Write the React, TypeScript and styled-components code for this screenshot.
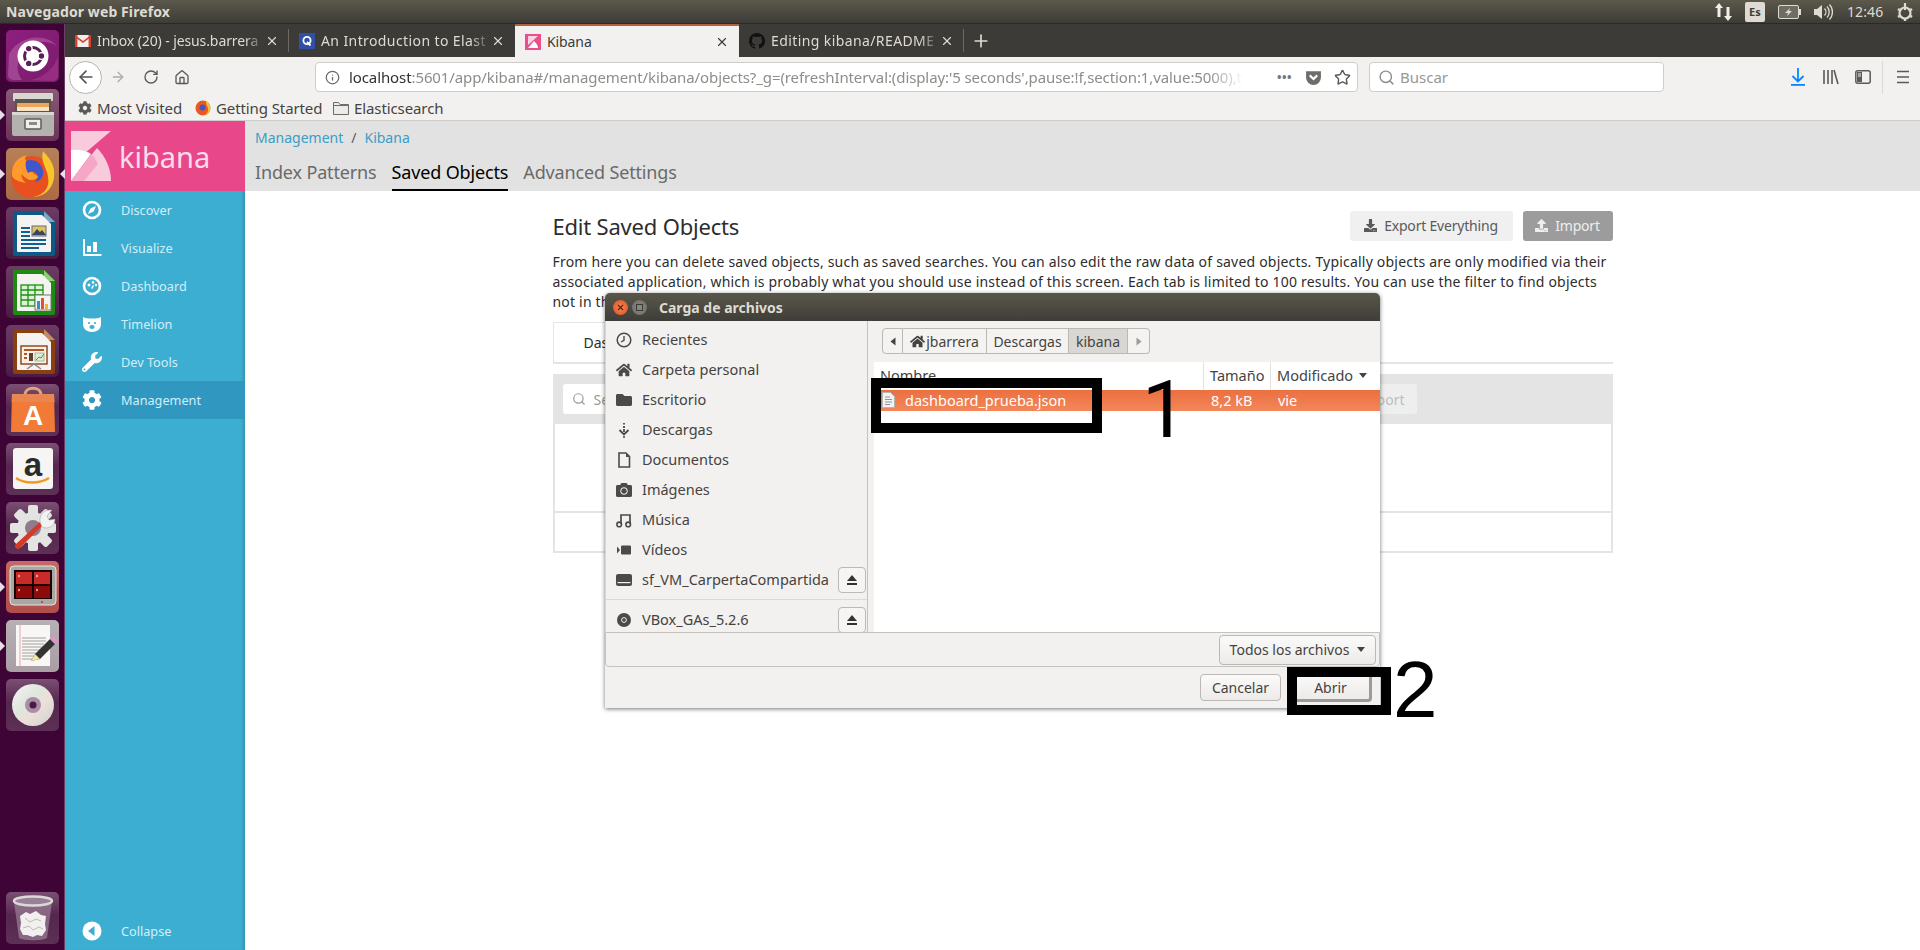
import React from "react";
import styled, { createGlobalStyle } from "styled-components";
import { ArrowLeft, ArrowRight, RotateCw, Home, Info, Star, Search, Plus, X } from "lucide-react";
import { FaWrench, FaCog, FaHome, FaCamera, FaFolder, FaDownload, FaUpload } from "react-icons/fa";

const UI = `"Noto Sans", "Open Sans", sans-serif`;

const Global = createGlobalStyle`
  html, body { margin: 0; padding: 0; background: #fff; overflow: hidden; }
  * { box-sizing: border-box; }
  body { font-family: ${UI}; }
`;

const Screen = styled.div`
  position: relative;
  width: 1920px;
  height: 950px;
  overflow: hidden;
  display: flex;
  flex-direction: column;
  background: #fff;
`;

/* ---------- Ubuntu top panel ---------- */
const TopPanel = styled.header`
  height: 24px;
  flex: none;
  display: flex;
  align-items: center;
  justify-content: space-between;
  padding: 0 0 0 6px;
  background: linear-gradient(#5c584c, #3d3c37);
  border-bottom: 1px solid #2b2a27;
  color: #dfdbd2;
  font-size: 14px;
  font-weight: 700;
  letter-spacing: 0.1px;
`;
const Tray = styled.div`
  display: flex;
  align-items: center;
  height: 24px;
  color: #dfdbd2;
`;
const TraySlot = styled.span<{ $w: number; $mr: number }>`
  width: ${(p) => p.$w}px;
  margin-right: ${(p) => p.$mr}px;
  display: flex;
  align-items: center;
  justify-content: center;
`;
const LangBadge = styled.span`
  width: 20px;
  height: 20px;
  margin-right: 13px;
  background: #dfdbd2;
  color: #3c3b37;
  border-radius: 2px;
  font-size: 11px;
  font-weight: 700;
  display: flex;
  align-items: center;
  justify-content: center;
`;
const Clock = styled.span`
  font-size: 14px;
  font-weight: 400;
  width: 37px;
  margin-right: 13px;
`;

/* ---------- layout ---------- */
const Desktop = styled.div`
  flex: 1;
  display: flex;
  min-height: 0;
`;
const Launcher = styled.nav`
  width: 65px;
  flex: none;
  display: flex;
  flex-direction: column;
  gap: 7px;
  padding: 6px 0 6px 6px;
  background: #3f0436;
  border-right: 1px solid #6e3d66;
`;
const Tile = styled.div<{ $bg?: string; $end?: boolean }>`
  position: relative;
  width: 53px;
  height: 52px;
  flex: none;
  border-radius: 5px;
  background: ${(p) => p.$bg || "linear-gradient(#7b5074, #55264e 45%, #5d3056)"};
  margin-top: ${(p) => (p.$end ? "auto" : "0")};
  display: flex;
  align-items: center;
  justify-content: center;
`;
const PipLeft = styled.i`
  position: absolute;
  left: -6px;
  top: 21px;
  border: 5px solid transparent;
  border-left-color: #e6e0e4;
  border-right-width: 0;
`;
const PipRight = styled.i`
  position: absolute;
  right: -6px;
  top: 21px;
  border: 5px solid transparent;
  border-right-color: #e6e0e4;
  border-left-width: 0;
`;
const Browser = styled.main`
  flex: 1;
  min-width: 0;
  display: flex;
  flex-direction: column;
`;

/* ---------- tabs ---------- */
const TabStrip = styled.div`
  height: 33px;
  flex: none;
  display: flex;
  background: #3c3b37;
  color: #dfdbd2;
  font-size: 14px;
  position: relative;
`;
const BrowserTab = styled.div<{ $w: number; $active?: boolean; $sep?: boolean }>`
  position: relative;
  width: ${(p) => p.$w}px;
  height: 33px;
  flex: none;
  display: flex;
  align-items: center;
  padding: 0 10px 0 10px;
  background: ${(p) => (p.$active ? "#f2f1ef" : "transparent")};
  color: ${(p) => (p.$active ? "#3c3b37" : "#dfdbd2")};
  border-top: ${(p) => (p.$active ? "2px solid #b3603e" : "0")};
  &::after {
    content: "";
    display: ${(p) => (p.$sep ? "block" : "none")};
    position: absolute;
    right: 0;
    top: 5px;
    bottom: 5px;
    width: 1px;
    background: #6a6964;
  }
`;
const TabLabel = styled.span<{ $fade?: boolean; $ls?: number }>`
  flex: 1;
  min-width: 0;
  margin-left: 6px;
  white-space: nowrap;
  letter-spacing: ${(p) => p.$ls ?? -0.1}px;
  ${(p) =>
    p.$fade &&
    `-webkit-mask-image: linear-gradient(90deg,#000 88%,transparent); mask-image: linear-gradient(90deg,#000 88%,transparent);`}
`;
const NewTab = styled.div`
  width: 34px;
  display: flex;
  align-items: center;
  justify-content: center;
  color: #dfdbd2;
`;

/* ---------- nav bar ---------- */
const NavBar = styled.div`
  height: 43px;
  flex: none;
  display: flex;
  align-items: center;
  background: #f2f1ef;
  color: #5a5855;
  padding: 0 0 3px 4px;
`;
const BackCircle = styled.div`
  width: 33px;
  height: 33px;
  flex: none;
  border-radius: 50%;
  background: #fff;
  border: 1px solid #b5b3ae;
  display: flex;
  align-items: center;
  justify-content: center;
  color: #55534f;
`;
const NavSlot = styled.span<{ $w: number; $ml?: number; $c?: string }>`
  width: ${(p) => p.$w}px;
  margin-left: ${(p) => p.$ml || 0}px;
  color: ${(p) => p.$c || "inherit"};
  display: flex;
  align-items: center;
  justify-content: center;
  flex: none;
`;
const UrlBox = styled.div`
  width: 1043px;
  height: 30px;
  margin-left: 125px;
  flex: none;
  background: #fff;
  border: 1px solid #cfcdc8;
  border-radius: 4px;
  display: flex;
  align-items: center;
  padding-left: 9px;
  font-size: 15px;
`;
const UrlText = styled.div`
  width: 895px;
  flex: none;
  margin-left: 9px;
  white-space: nowrap;
  color: #8f8d89;
  letter-spacing: -0.1px;
  -webkit-mask-image: linear-gradient(90deg, #000 96%, transparent);
  mask-image: linear-gradient(90deg, #000 96%, transparent);
  b {
    font-weight: 400;
    color: #33322f;
  }
`;
const UrlDots = styled.span`
  width: 20px;
  margin-left: 33px;
  color: #777;
  font-weight: 700;
  font-size: 12px;
  letter-spacing: 0.5px;
`;
const SearchBox = styled.div`
  width: 295px;
  height: 30px;
  margin-left: 11px;
  flex: none;
  background: #fff;
  border: 1px solid #cfcdc8;
  border-radius: 4px;
  display: flex;
  align-items: center;
  gap: 5px;
  padding-left: 8px;
  color: #9a9895;
  font-size: 15px;
`;
const ToolSep = styled.span`
  width: 1px;
  height: 33px;
  background: #dcdad6;
  margin-left: 11px;
  flex: none;
`;

/* ---------- bookmarks ---------- */
const Bookmarks = styled.div`
  height: 21px;
  flex: none;
  display: flex;
  align-items: center;
  padding: 0 0 5px 13px;
  background: #f2f1ef;
  border-bottom: 1px solid #cfcdc8;
  color: #45433f;
  font-size: 15px;
`;
const Bookmark = styled.span<{ $w: number }>`
  width: ${(p) => p.$w}px;
  flex: none;
  display: flex;
  align-items: center;
  gap: 5px;
  white-space: nowrap;
  letter-spacing: -0.1px;
`;

/* ---------- kibana ---------- */
const KibanaApp = styled.div`
  flex: 1;
  display: flex;
  min-height: 0;
`;
const Side = styled.aside`
  width: 180px;
  flex: none;
  display: flex;
  flex-direction: column;
  background: #3caed2;
  box-shadow: inset -4px 0 3px -2px rgba(0, 0, 0, 0.15);
`;
const LogoBar = styled.div`
  height: 70px;
  flex: none;
  background: #e8488a;
  display: flex;
  align-items: center;
  padding-left: 6px;
  gap: 8px;
  color: #fbdce9;
  font-size: 29px;
  line-height: 1;
`;
const NavList = styled.ul`
  list-style: none;
  margin: 0;
  padding: 0;
  flex: 1;
  display: flex;
  flex-direction: column;
`;
const NavItem = styled.li<{ $active?: boolean; $end?: boolean }>`
  height: 38px;
  flex: none;
  display: flex;
  align-items: center;
  padding-left: 17px;
  gap: 19px;
  color: #d2eef8;
  font-size: 12.7px;
  background: ${(p) => (p.$active ? "#2f97c0" : "transparent")};
  margin-top: ${(p) => (p.$end ? "auto" : "0")};
  svg {
    width: 20px;
    height: 20px;
    color: #fff;
    flex: none;
  }
`;
const Page = styled.section`
  flex: 1;
  min-width: 0;
  display: flex;
  flex-direction: column;
`;
const AppHeader = styled.div`
  height: 70px;
  flex: none;
  background: #e2e2e2;
  padding: 7px 0 0 10px;
`;
const Crumbs = styled.div`
  display: flex;
  gap: 8px;
  font-size: 14px;
  line-height: 20px;
  color: #5a5a5a;
  a {
    color: #3c9dc4;
  }
`;
const HeaderTabs = styled.div`
  display: flex;
  gap: 15px;
  margin-top: 8px;
  font-size: 18px;
  letter-spacing: -0.15px;
`;
const HeaderTab = styled.span<{ $active?: boolean }>`
  height: 35px;
  line-height: 33px;
  color: ${(p) => (p.$active ? "#000" : "#6a6a6a")};
  border-bottom: ${(p) => (p.$active ? "2px solid #000" : "2px solid transparent")};
`;
const Container = styled.div`
  width: 1060px;
  margin: 0 auto;
  padding-top: 20px;
`;
const TitleRow = styled.div`
  display: flex;
  align-items: center;
  height: 30px;
`;
const Title = styled.h1`
  margin: 0;
  flex: 1;
  font-size: 22px;
  font-weight: 400;
  color: #2d2d2d;
  letter-spacing: -0.2px;
`;
const KButton = styled.button<{ $primary?: boolean; $w: number }>`
  height: 30px;
  width: ${(p) => p.$w}px;
  border: 0;
  border-radius: 3px;
  margin-left: 10px;
  padding: 0 0 2px;
  display: flex;
  align-items: center;
  justify-content: center;
  gap: 7px;
  font-family: ${UI};
  font-size: 14px;
  letter-spacing: -0.2px;
  background: ${(p) => (p.$primary ? "#9c9c9c" : "#f0f0f0")};
  color: ${(p) => (p.$primary ? "#eee" : "#5a5a5a")};
`;
const Lead = styled.p`
  margin: 11px 0 0;
  font-size: 14px;
  line-height: 20px;
  color: #2d2d2d;
  white-space: nowrap;
  letter-spacing: 0.2px;
`;
const ObjectTabs = styled.div`
  margin-top: 10px;
  height: 42px;
  border-bottom: 2px solid #e4e4e4;
  display: flex;
`;
const ObjectTab = styled.div`
  width: 200px;
  height: 41px;
  border: 1px solid #e4e4e4;
  border-bottom: 0;
  padding: 10px 0 0 30px;
  font-size: 14px;
  color: #2d2d2d;
`;
const FilterBar = styled.div`
  margin-top: 10px;
  height: 50px;
  background: #e4e4e4;
  padding: 10px;
  display: flex;
`;
const FilterInput = styled.div`
  width: 700px;
  height: 30px;
  background: #fff;
  border-radius: 3px;
  display: flex;
  align-items: center;
  gap: 8px;
  padding-left: 9px;
  color: #999;
  font-size: 14px;
`;
const GhostBtn = styled.span`
  width: 90px;
  height: 30px;
  margin-left: 64px;
  border-radius: 3px;
  background: #eee;
  color: #bdbdbd;
  font-size: 14px;
  display: flex;
  align-items: center;
  justify-content: flex-end;
  padding-right: 12px;
`;
const TableBody = styled.div`
  height: 89px;
  border: 2px solid #e4e4e4;
  border-top: 0;
`;
const TableFoot = styled.div`
  height: 40px;
  border: 2px solid #e4e4e4;
  border-top: 0;
`;

/* ---------- file dialog ---------- */
const Dialog = styled.div`
  position: absolute;
  left: 605px;
  top: 293px;
  width: 775px;
  height: 415px;
  display: flex;
  flex-direction: column;
  background: #f2f1f0;
  border-radius: 5px 5px 0 0;
  box-shadow: 0 1px 4px rgba(0, 0, 0, 0.55);
  font-size: 14.5px;
  color: #45433f;
`;
const DialogTitle = styled.div`
  height: 28px;
  flex: none;
  border-radius: 5px 5px 0 0;
  background: linear-gradient(#5a564a, #3e3d38);
  display: flex;
  align-items: center;
  padding-left: 8px;
  color: #dfdbd2;
  font-weight: 700;
  font-size: 14px;
`;
const WinBtn = styled.span<{ $close?: boolean }>`
  width: 15px;
  height: 15px;
  border-radius: 50%;
  margin-right: 4px;
  background: ${(p) => (p.$close ? "radial-gradient(#f08a5a,#df4e1f)" : "radial-gradient(#8d8b85,#6b6962)")};
  color: ${(p) => (p.$close ? "#5a2008" : "#3c3b37")};
  display: flex;
  align-items: center;
  justify-content: center;
`;
const MaxGlyph = styled.i`
  width: 7px;
  height: 7px;
  border: 1px solid #3c3b37;
`;
const DialogTitleText = styled.span`
  margin-left: 8px;
`;
const DialogBody = styled.div`
  height: 311px;
  flex: none;
  display: flex;
`;
const Places = styled.div`
  width: 263px;
  flex: none;
  padding-top: 4px;
  border-right: 1px solid #c6c3be;
  border-left: 1px solid #d8d6d2;
  overflow: hidden;
`;
const Place = styled.div<{ $mt?: number }>`
  height: 30px;
  margin-top: ${(p) => p.$mt || 0}px;
  display: flex;
  align-items: center;
  padding-left: 10px;
  gap: 10px;
  white-space: nowrap;
  svg {
    width: 16px;
    height: 16px;
    flex: none;
    color: #4c4a46;
  }
`;
const PlaceName = styled.span`
  flex: 1;
  min-width: 0;
  padding-bottom: 2px;
`;
const Eject = styled.span`
  width: 28px;
  height: 26px;
  flex: none;
  margin-right: 1px;
  background: #f6f5f4;
  border: 1px solid #bcb9b4;
  border-radius: 4px;
  display: flex;
  align-items: center;
  justify-content: center;
  svg {
    width: 12px;
    height: 12px;
  }
`;
const PlaceRule = styled.div`
  height: 1px;
  margin-top: 4px;
  background: #dbd9d5;
`;
const FilesPane = styled.div`
  flex: 1;
  min-width: 0;
  display: flex;
  flex-direction: column;
  padding-left: 6px;
`;
const PathBar = styled.div`
  height: 41px;
  flex: none;
  padding: 7px 0 0 8px;
  display: flex;
`;
const Crumb = styled.span<{ $w: number; $on?: boolean; $first?: boolean; $last?: boolean }>`
  width: ${(p) => p.$w}px;
  height: 26px;
  flex: none;
  display: flex;
  align-items: center;
  justify-content: center;
  gap: 1px;
  border: 1px solid #bcb9b4;
  border-left-width: ${(p) => (p.$first ? 1 : 0)}px;
  border-radius: ${(p) => (p.$first ? "4px 0 0 4px" : p.$last ? "0 4px 4px 0" : "0")};
  background: ${(p) => (p.$on ? "#d9d7d3" : "#f4f3f2")};
  color: #45433f;
  font-size: 14px;
`;
const ListPane = styled.div`
  flex: 1;
  background: #fff;
  display: flex;
  flex-direction: column;
`;
const ColHead = styled.div`
  height: 28px;
  flex: none;
  display: flex;
  align-items: center;
  color: #45433f;
`;
const Col = styled.span<{ $w: number; $sep?: boolean }>`
  width: ${(p) => p.$w}px;
  flex: none;
  height: 100%;
  display: flex;
  align-items: center;
  gap: 6px;
  padding: 0 0 2px 6px;
  border-left: ${(p) => (p.$sep ? "1px solid #e4e2df" : "0")};
`;
const FileRow = styled.div`
  height: 21px;
  flex: none;
  display: flex;
  align-items: center;
  padding-bottom: 2px;
  color: #fff;
  background: linear-gradient(#ec6f3f, #f2875a);
`;
const FileName = styled.span`
  width: 329px;
  flex: none;
  display: flex;
  align-items: center;
  gap: 10px;
  padding-left: 8px;
`;
const Cell = styled.span<{ $w: number }>`
  width: ${(p) => p.$w}px;
  flex: none;
  padding-left: 8px;
`;
const DialogFilter = styled.div`
  height: 35px;
  flex: none;
  display: flex;
  justify-content: flex-end;
  align-items: center;
  padding-right: 3px;
  border: 1px solid #c6c3be;
  border-radius: 0 0 4px 4px;
`;
const GtkBtn = styled.span<{ $w: number; $h: number }>`
  width: ${(p) => p.$w}px;
  height: ${(p) => p.$h}px;
  flex: none;
  border: 1px solid #bcb9b4;
  border-radius: 4px;
  background: linear-gradient(#fbfafa, #ecebe9);
  display: flex;
  align-items: center;
  justify-content: center;
  gap: 8px;
  color: #45433f;
  font-size: 14px;
`;
const Caret = styled.i`
  border: 4px solid transparent;
  border-top: 5px solid #45433f;
  border-bottom-width: 0;
`;
const DialogActions = styled.div`
  height: 41px;
  flex: none;
  display: flex;
  align-items: flex-start;
  padding: 7px 0 0 595px;
  gap: 10px;
`;
const OpenBtn = styled(GtkBtn)`
  border-right: 3px solid #9e9b96;
  border-bottom: 3px solid #9e9b96;
`;

/* ---------- annotations ---------- */
const Mark = styled.div<{ $l: number; $t: number; $w: number; $h: number }>`
  position: absolute;
  left: ${(p) => p.$l}px;
  top: ${(p) => p.$t}px;
  width: ${(p) => p.$w}px;
  height: ${(p) => p.$h}px;
  border: 10px solid #000;
`;
const Digit = styled.span<{ $l: number; $t: number; $font: string }>`
  position: absolute;
  left: ${(p) => p.$l}px;
  top: ${(p) => p.$t}px;
  font-family: ${(p) => p.$font}, sans-serif;
  font-size: 80px;
  line-height: 80px;
  color: #000;
`;

/* ---------- drawings ---------- */
const Ico = ({ children, s = 52 }: { children: React.ReactNode; s?: number }) => (
  <svg width={s} height={s} viewBox="0 0 52 52">{children}</svg>
);
const Doc = ({ edge, corner, children }: { edge: string; corner: string; children: React.ReactNode }) => (
  <Ico>
    <path d="M6 4h31l11 11v32a2 2 0 0 1-2 2H8a2 2 0 0 1-2-2z" fill={edge} />
    <path d="M37 4l11 11H37z" fill={corner} />
    <path d="M10 8h25l9 9v27a1 1 0 0 1-1 1H11a1 1 0 0 1-1-1z" fill="#f4f3f1" />
    {children}
  </Ico>
);
const UbuntuIcon = () => (
  <Ico>
    <path d="M2 24C12 6 38 2 50 16 38 8 18 12 12 30c-3 8-1 14 3 20H6a5 5 0 0 1-5-5z" fill="#b765a8" opacity=".55" />
    <path d="M16 50c14 2 30-8 35-24v20a5 5 0 0 1-5 5z" fill="#a8398f" opacity=".6" />
    <circle cx="26" cy="26" r="15.5" fill="#fff" />
    <circle cx="26" cy="26" r="8.5" fill="none" stroke="#5b1f55" strokeWidth="3" />
    <circle cx="34.5" cy="26" r="3.4" fill="#5b1f55" stroke="#fff" strokeWidth="1.4" />
    <circle cx="21.7" cy="18.6" r="3.4" fill="#5b1f55" stroke="#fff" strokeWidth="1.4" />
    <circle cx="21.7" cy="33.4" r="3.4" fill="#5b1f55" stroke="#fff" strokeWidth="1.4" />
  </Ico>
);
const FilesIcon = () => (
  <Ico>
    <rect x="6" y="4" width="40" height="8" rx="1" fill="#d8d7d4" />
    <rect x="8" y="10" width="36" height="15" fill="#59544d" />
    <rect x="10" y="14" width="32" height="4" fill="#f0a35a" />
    <rect x="10" y="18" width="32" height="4" fill="#f8e4c4" />
    <rect x="5" y="23" width="42" height="24" rx="2" fill="#b3b2ae" />
    <rect x="5" y="23" width="42" height="3" fill="#d9d8d5" />
    <rect x="18" y="30" width="16" height="10" rx="1" fill="#f0efed" stroke="#5d5b57" strokeWidth="1.5" />
    <rect x="22" y="33" width="8" height="3" fill="#8b8a86" />
  </Ico>
);
const FirefoxIcon = () => (
  <Ico>
    <circle cx="25" cy="29" r="21" fill="#e8501f" />
    <path d="M36 3c5 6 13 13 11 27-2 13-12 19-21 19 12-2 17-11 15-20C40 20 33 14 36 3z" fill="#f8c52c" />
    <path d="M5 28C4 16 11 9 20 7c-3 3-2 5 0 6 4 1 10 3 12 9-4-2-7-1-9 1 3 0 5 3 3 6-3 3-9 2-11-3-1 2 0 6 4 9C13 34 7 32 5 28z" fill="#ff9a2b" />
    <path d="M19 13c8-3 16 2 17 10 1 6-3 10-8 11 3-3 3-7 1-9-3-2-6-1-8 0-2-3-3-8-2-12z" fill="#3f57c9" />
    <path d="M22 27c4-2 8-1 9 2-2 3-7 4-11 2z" fill="#f8a12a" />
  </Ico>
);
const WriterIcon = () => (
  <Doc edge="#0c5a85" corner="#7ba7c6">
    <rect x="14" y="20" width="9" height="2" fill="#10608f" />
    <rect x="14" y="24" width="9" height="2" fill="#10608f" />
    <rect x="14" y="28" width="9" height="2" fill="#10608f" />
    <rect x="14" y="32" width="25" height="2" fill="#10608f" />
    <rect x="14" y="36" width="25" height="2" fill="#10608f" />
    <rect x="14" y="40" width="18" height="2" fill="#10608f" />
    <rect x="25" y="19" width="14" height="10" fill="#e8c15d" stroke="#5a6f83" />
    <path d="M25 28l5-6 3 3 2-2 4 5z" fill="#34475c" />
  </Doc>
);
const CalcIcon = () => (
  <Doc edge="#1f8a12" corner="#8ccf72">
    <g fill="none" stroke="#18940f" strokeWidth="1.3">
      <rect x="14" y="19" width="22" height="21" fill="#dff1d8" />
      <path d="M14 24h22M14 29h22M14 34h22M21 19v21M28 19v21" />
    </g>
    <rect x="28" y="29" width="16" height="15" fill="#f3f3f3" stroke="#777" />
    <rect x="30" y="35" width="3" height="8" fill="#3b8dc9" />
    <rect x="34" y="32" width="3" height="11" fill="#e2532d" />
    <rect x="38" y="38" width="3" height="5" fill="#f2b32a" />
  </Doc>
);
const ImpressIcon = () => (
  <Doc edge="#8a3f12" corner="#c58c62">
    <rect x="14" y="21" width="26" height="18" fill="#fdf1e4" stroke="#8a3f12" strokeWidth="1.4" />
    <rect x="17" y="24" width="20" height="2" fill="#b4552a" />
    <rect x="17" y="28" width="3" height="2" fill="#b4552a" />
    <rect x="17" y="32" width="3" height="2" fill="#b4552a" />
    <rect x="22" y="28" width="4" height="8" fill="#5c4030" />
    <rect x="28" y="28" width="9" height="8" fill="#dcefd8" stroke="#888" strokeWidth=".6" />
    <path d="M29 35l3-3 2 1 3-4" stroke="#3d9b2e" fill="none" />
    <path d="M20 44l7-5 7 5" fill="none" stroke="#888" strokeWidth="1.5" />
  </Doc>
);
const SoftwareIcon = () => (
  <Ico>
    <path d="M18 11c0-9 16-9 16 0" fill="none" stroke="#e2a27d" strokeWidth="3" />
    <path d="M5 10h42l1 38H4z" fill="#f27a37" />
    <path d="M5 10h42l.6 8H4.6z" fill="#e88652" />
    <text x="26" y="41" textAnchor="middle" fontFamily="Liberation Sans" fontWeight="700" fontSize="28" fill="#fff">A</text>
  </Ico>
);
const AmazonIcon = () => (
  <Ico>
    <rect x="6" y="5" width="40" height="41" rx="3" fill="#f6f5f3" />
    <text x="26" y="33" textAnchor="middle" fontFamily="Liberation Sans" fontWeight="700" fontSize="33" fill="#2a2a2a">a</text>
    <path d="M9 35c9 6 23 6 33 0" fill="none" stroke="#f29a1f" strokeWidth="2.5" />
  </Ico>
);
const ToolsIcon = () => (
  <Ico>
    <g fill="#e3e3e1">
      <circle cx="26" cy="26" r="16" />
      <rect x="21" y="3" width="10" height="46" rx="2" />
      <rect x="3" y="21" width="46" height="10" rx="2" />
      <rect x="21" y="3" width="10" height="46" rx="2" transform="rotate(45 26 26)" />
      <rect x="21" y="3" width="10" height="46" rx="2" transform="rotate(-45 26 26)" />
    </g>
    <circle cx="26" cy="26" r="8" fill="#8f7b8b" />
    <path d="M9 42l25-23 3 3-24 24a3 3 0 0 1-5-3z" fill="#d33a28" />
    <path d="M33 20c-1-7 4-13 12-12l-5 6 2 4 6-1c0 7-7 11-13 8z" fill="#f2f2f0" stroke="#999" strokeWidth=".5" />
  </Ico>
);
const TerminalIcon = () => (
  <Ico>
    <rect x="3" y="5" width="46" height="39" rx="4" fill="#a9a8a5" stroke="#e5e5e3" />
    <rect x="7" y="9" width="38" height="29" fill="#1a0000" />
    <rect x="9" y="11" width="16" height="12" fill="#c92a2a" />
    <rect x="27" y="11" width="16" height="12" fill="#c92a2a" />
    <rect x="9" y="25" width="16" height="12" fill="#8e0b0b" />
    <rect x="27" y="25" width="16" height="12" fill="#8e0b0b" />
    <path d="M11 14l2 1-2 1M29 14l2 1-2 1M11 28l2 1-2 1M29 28l2 1-2 1" stroke="#fff" fill="none" strokeWidth=".7" />
    <circle cx="35" cy="41" r="1" fill="#e02020" />
  </Ico>
);
const EditorIcon = () => (
  <Ico>
    <rect x="9" y="5" width="34" height="41" fill="#f8f7f5" />
    <path d="M13 5v41" stroke="#e6a9a9" />
    <path d="M15 18h24M15 21h24M15 24h22M15 27h24M15 30h18M15 33h14M15 36h12M15 39h16" stroke="#8b8b8b" strokeWidth=".8" />
    <path d="M24 41l4-7 15-15 5 5-15 15z" fill="#333" />
    <path d="M43 19l3-3 5 5-3 3z" fill="#e493c8" />
    <path d="M24 41l4-7 5 5z" fill="#f3e89d" />
  </Ico>
);
const DiscIcon = () => (
  <Ico>
    <defs>
      <linearGradient id="cd" x1="0" y1="0" x2="1" y2="1">
        <stop offset="0" stopColor="#f5f5f5" />
        <stop offset=".4" stopColor="#dfe6dd" />
        <stop offset=".6" stopColor="#ece0d8" />
        <stop offset="1" stopColor="#cfcfcf" />
      </linearGradient>
    </defs>
    <circle cx="26" cy="26" r="21" fill="url(#cd)" />
    <circle cx="26" cy="26" r="8" fill="#a98ea7" />
    <circle cx="26" cy="26" r="3.5" fill="#4a1a45" />
  </Ico>
);
const TrashIcon = () => (
  <Ico>
    <path d="M7 10l5 36c4 3 24 3 28 0l5-36z" fill="#a78fa5" opacity=".6" />
    <ellipse cx="26" cy="9" rx="19" ry="4.5" fill="#9a8098" stroke="#dcdad8" strokeWidth="2.5" />
    <path d="M13 24l6-4 4 2 6-3 5 4 5 1-1 8 1 6-4 6-5-1-4 2-6-2-4 0-3-6 1-6z" fill="#f1f0ee" />
    <path d="M18 26l5 4 6-3 5 2M16 36l6-2 4 4 6-3 4 2" stroke="#bdbbb8" fill="none" />
  </Ico>
);
const KibanaMark = ({ s = 50 }: { s?: number }) => (
  <svg width={s * 0.8} height={s} viewBox="0 0 40 50">
    <path d="M0 0h40L0 34z" fill="#f9c9dc" />
    <path d="M0 19c9-1 15 1 20 4L0 50z" fill="#fff" />
    <path d="M0 50L26 17c9 9 14 21 14 33z" fill="#f9c9dc" />
    <path d="M0 50l20-27c4 4 5 6 7 10L13 50z" fill="#f6a6c7" />
  </svg>
);
const Compass = () => (
  <svg viewBox="0 0 20 20">
    <circle cx="10" cy="10" r="8" fill="none" stroke="currentColor" strokeWidth="2.6" />
    <path d="M14 6l-2.4 5.6L6 14l2.4-5.6z" fill="currentColor" />
  </svg>
);
const DashIcon = () => (
  <svg viewBox="0 0 20 20">
    <circle cx="10" cy="10" r="8" fill="none" stroke="currentColor" strokeWidth="2.6" />
    <circle cx="7" cy="9" r="1.5" fill="currentColor" />
    <circle cx="11" cy="6.4" r="1.3" fill="currentColor" />
    <circle cx="14" cy="9" r="1.2" fill="currentColor" />
    <path d="M9 12l2-3 1 .6-1.5 3.4z" fill="currentColor" />
  </svg>
);
const BearIcon = () => (
  <svg viewBox="0 0 20 20">
    <path d="M1 3c2 1 4 1.6 9 1.6S17 4 19 3v7c0 5-4 8-9 8s-9-3-9-8z" fill="currentColor" />
    <circle cx="7" cy="9" r="1.1" fill="#3caed2" />
    <circle cx="13" cy="9" r="1.1" fill="#3caed2" />
    <ellipse cx="10" cy="13" rx="2.6" ry="1.9" fill="#3caed2" />
  </svg>
);
const VisualizeIcon = () => (
  <svg viewBox="0 0 20 20">
    <path d="M1 1v17h18.5v-2H3V1z" fill="currentColor" />
    <rect x="5" y="8" width="4" height="6" fill="currentColor" />
    <rect x="11" y="4" width="4" height="10" fill="currentColor" />
  </svg>
);
const CollapseIcon = () => (
  <svg viewBox="0 0 20 20">
    <circle cx="10" cy="10" r="9.5" fill="currentColor" />
    <path d="M12.5 5v10L6 10z" fill="#3caed2" />
  </svg>
);
const ClockIco = () => (
  <svg viewBox="0 0 16 16"><circle cx="8" cy="8" r="6.8" fill="none" stroke="currentColor" strokeWidth="1.5" /><path d="M8 4v4.4L5 10" fill="none" stroke="currentColor" strokeWidth="1.4" /></svg>
);
const DownIco = () => (
  <svg viewBox="0 0 16 16"><path d="M8 1v1.5M8 4v2M8 7v3" stroke="currentColor" strokeWidth="1.8" fill="none" /><path d="M3.5 8L8 12.5 12.5 8" stroke="currentColor" strokeWidth="1.8" fill="none" /><circle cx="8" cy="15" r="1" fill="currentColor" /></svg>
);
const DocIco = () => (
  <svg viewBox="0 0 16 16"><path d="M3 1h7l3.5 3.5V15H3z" fill="none" stroke="currentColor" strokeWidth="1.6" /><path d="M10 1v4h3.5" fill="currentColor" /></svg>
);
const MusicIco = () => (
  <svg viewBox="0 0 16 16"><path d="M5 12V3h9v9" fill="none" stroke="currentColor" strokeWidth="1.7" /><circle cx="3.2" cy="12.4" r="2.3" fill="none" stroke="currentColor" strokeWidth="1.6" /><circle cx="12.2" cy="12.4" r="2.3" fill="none" stroke="currentColor" strokeWidth="1.6" /></svg>
);
const VideoIco = () => (
  <svg viewBox="0 0 16 16"><rect x="5" y="3.5" width="10" height="9" rx="1" fill="currentColor" /><path d="M1 4.5l3 3.5-3 3.5z" fill="currentColor" /></svg>
);
const DriveIco = () => (
  <svg viewBox="0 0 16 16"><path d="M2 2h12a2 2 0 0 1 2 2v8a2 2 0 0 1-2 2H2a2 2 0 0 1-2-2V4a2 2 0 0 1 2-2z" fill="currentColor" /><rect x="1.5" y="10" width="13" height="1.2" fill="#f2f1f0" /></svg>
);
const DiscIco = () => (
  <svg viewBox="0 0 16 16"><circle cx="8" cy="8" r="7" fill="currentColor" /><circle cx="8" cy="8" r="2.4" fill="none" stroke="#f2f1f0" /></svg>
);
const EjectIco = () => (
  <svg viewBox="0 0 12 12"><path d="M6 1l5 6H1z" fill="#35332f" /><rect x="1" y="9" width="10" height="2" fill="#35332f" /></svg>
);
const Gmail = () => (
  <svg width="16" height="16" viewBox="0 0 16 16"><rect y="2" width="16" height="12" fill="#eee" /><path d="M0 2l8 6 8-6v2L8 10 0 4z" fill="#d8402f" /><rect y="2" width="2.4" height="12" fill="#d8402f" /><rect x="13.6" y="2" width="2.4" height="12" fill="#d8402f" /></svg>
);
const QuoraMark = () => (
  <svg width="16" height="16" viewBox="0 0 16 16"><rect width="16" height="16" fill="#2f4fa8" /><circle cx="8" cy="7.5" r="3.6" fill="none" stroke="#fff" strokeWidth="1.8" /><path d="M8 9l3.5 3.5" stroke="#fff" strokeWidth="1.8" /></svg>
);
const GitHubMark = () => (
  <svg width="16" height="16" viewBox="0 0 16 16"><path fill="#111" d="M8 0C3.6 0 0 3.6 0 8c0 3.5 2.3 6.5 5.5 7.6.4.1.5-.2.5-.4v-1.4c-2.2.5-2.7-1-2.7-1-.4-.9-.9-1.2-.9-1.2-.7-.5.1-.5.1-.5.8.1 1.2.8 1.2.8.7 1.2 1.9.9 2.3.7.1-.5.3-.9.5-1.1-1.8-.2-3.6-.9-3.6-4 0-.9.3-1.6.8-2.1-.1-.2-.4-1 .1-2.1 0 0 .7-.2 2.2.8a7.6 7.6 0 0 1 4 0c1.5-1 2.2-.8 2.2-.8.4 1.1.2 1.9.1 2.1.5.6.8 1.3.8 2.1 0 3.1-1.9 3.7-3.7 3.9.3.3.6.8.6 1.5v2.2c0 .2.1.5.6.4A8 8 0 0 0 16 8c0-4.4-3.6-8-8-8z" /></svg>
);
const SmallKibana = () => (
  <svg width="16" height="16" viewBox="0 0 16 16"><rect width="16" height="16" fill="#ea4e8e" /><path d="M3 2h10L3 11z" fill="#fbd3e3" /><path d="M3 14l6-7c2 2 4 4 4 7z" fill="#fff" /></svg>
);
const FirefoxSmall = () => (
  <svg width="16" height="16" viewBox="0 0 16 16"><circle cx="8" cy="8" r="7.5" fill="#e8591f" /><path d="M11 .8c3 2 5 6 4 9.5-1 3-4 5.2-7 5.2 4-1 5.5-4.2 5-7C12.6 6.4 10.5 4 11 .8z" fill="#f9c22c" /><circle cx="7.5" cy="7.5" r="3" fill="#3f57c9" /></svg>
);
const FolderOutline = () => (
  <svg width="16" height="16" viewBox="0 0 16 16"><path d="M.5 2.5h5l1.5 2h8.5v10H.5z" fill="#ecebe8" stroke="#6e6c68" /><path d="M.5 5.5h15" stroke="#6e6c68" /></svg>
);
const Pocket = () => (
  <svg width="17" height="17" viewBox="0 0 16 16"><path d="M1 2h14v6a7 7 0 0 1-14 0z" fill="#6f6d69" /><path d="M4.5 6L8 9.5 11.5 6" fill="none" stroke="#fff" strokeWidth="2" /></svg>
);
const LibraryIco = () => (
  <svg width="16" height="16" viewBox="0 0 16 16"><path d="M1 1v14M5 1v14M9 1v14M11 1l4 14" stroke="#5c5a56" strokeWidth="1.6" fill="none" /></svg>
);
const SidebarIco = () => (
  <svg width="16" height="16" viewBox="0 0 16 16"><rect x=".8" y="1.8" width="14.4" height="12.4" rx="2" fill="none" stroke="#5c5a56" strokeWidth="1.5" /><rect x="2" y="3" width="5" height="10" fill="#5c5a56" /><path d="M3 5h3M3 7h3" stroke="#f2f1ef" /></svg>
);
const Burger = () => (
  <svg width="16" height="16" viewBox="0 0 16 16"><path d="M2 2.5h12M2 8h12M2 13.5h12" stroke="#5c5a56" strokeWidth="1.6" /></svg>
);
const DownloadBlue = () => (
  <svg width="16" height="18" viewBox="0 0 16 18"><path d="M8 0v13M2.5 8L8 13.5 13.5 8" fill="none" stroke="#0a84ff" strokeWidth="1.8" /><rect x="1" y="16" width="14" height="1.8" fill="#0a84ff" /></svg>
);
const NetIco = () => (
  <svg width="19" height="20" viewBox="0 0 19 20"><path d="M5 1l4 5H6.5v9h-3V6H1zM14 19l-4-5h2.5V5h3v9H18z" fill="#f2efe8" /></svg>
);
const Battery = () => (
  <svg width="23" height="14" viewBox="0 0 23 14"><rect x=".5" y=".5" width="20" height="13" rx="1.5" fill="#6e6c63" stroke="#dfdbd2" /><rect x="21" y="4" width="2" height="6" fill="#dfdbd2" /><path d="M12 3L7 8h3l-1 3 5-5h-3z" fill="#dfdbd2" /></svg>
);
const Volume = () => (
  <svg width="19" height="18" viewBox="0 0 19 18"><path d="M0 6h3l5-4v14l-5-4H0z" fill="#dfdbd2" /><path d="M10.5 5.5a5 5 0 0 1 0 7M13 3.5a8 8 0 0 1 0 11M15.5 1.5a11 11 0 0 1 0 15" fill="none" stroke="#dfdbd2" strokeWidth="1.3" /></svg>
);
const PowerGear = () => (
  <svg width="16" height="18" viewBox="0 0 16 18"><g stroke="#dfdbd2" fill="none"><circle cx="8" cy="10" r="5.5" strokeWidth="2.2" /><path d="M8 0v7" strokeWidth="2.2" /><path d="M8 16v2M1 6l1.5 1M15 6l-1.5 1M1 14l1.5-1M15 14l-1.5-1" strokeWidth="2.4" /></g></svg>
);
const JsonFile = () => (
  <svg width="13" height="16" viewBox="0 0 13 16"><path d="M.5.5h8l4 4v11H.5z" fill="#f4f3f1" stroke="#b7b5b0" /><path d="M3 5h5M3 7.5h7M3 10h7M3 12.5h5" stroke="#8a8fa8" /></svg>
);

const tiles: { icon: React.ReactNode; bg?: string; left?: boolean; right?: boolean; end?: boolean }[] = [
  { icon: <UbuntuIcon />, bg: "linear-gradient(135deg,#8e1f7e,#7a1c6c)" },
  { icon: <FilesIcon />, left: true, bg: "linear-gradient(#8a5a76,#6b3358)" },
  { icon: <FirefoxIcon />, left: true, right: true, bg: "linear-gradient(#b68058,#ac6a46)" },
  { icon: <WriterIcon />, bg: "linear-gradient(#6c3c64,#4a1c44)" },
  { icon: <CalcIcon />, bg: "linear-gradient(#6c3c64,#4a1c44)" },
  { icon: <ImpressIcon />, bg: "linear-gradient(#6c3c64,#4a1c44)" },
  { icon: <SoftwareIcon /> },
  { icon: <AmazonIcon /> },
  { icon: <ToolsIcon /> },
  { icon: <TerminalIcon />, left: true, bg: "linear-gradient(#c46a68,#b14c4a)" },
  { icon: <EditorIcon />, left: true, bg: "linear-gradient(#b8b0b4,#a89ea4)" },
  { icon: <DiscIcon /> },
  { icon: <TrashIcon />, end: true },
];

const places: { name: string; icon: React.ReactNode }[] = [
  { name: "Recientes", icon: <ClockIco /> },
  { name: "Carpeta personal", icon: <FaHome /> },
  { name: "Escritorio", icon: <FaFolder /> },
  { name: "Descargas", icon: <DownIco /> },
  { name: "Documentos", icon: <DocIco /> },
  { name: "Imágenes", icon: <FaCamera /> },
  { name: "Música", icon: <MusicIco /> },
  { name: "Vídeos", icon: <VideoIco /> },
];

export default function App() {
  return (
    <>
      <Global />
      <Screen>
        <TopPanel>
          <span>Navegador web Firefox</span>
          <Tray>
            <TraySlot $w={19} $mr={12}><NetIco /></TraySlot>
            <LangBadge>Es</LangBadge>
            <TraySlot $w={23} $mr={13}><Battery /></TraySlot>
            <TraySlot $w={19} $mr={14}><Volume /></TraySlot>
            <Clock>12:46</Clock>
            <TraySlot $w={16} $mr={7}><PowerGear /></TraySlot>
          </Tray>
        </TopPanel>
        <Desktop>
          <Launcher>
            {tiles.map((t, i) => (
              <Tile key={i} $bg={t.bg} $end={t.end}>
                {t.left && <PipLeft />}
                {t.right && <PipRight />}
                {t.icon}
              </Tile>
            ))}
          </Launcher>
          <Browser>
            <TabStrip>
              <BrowserTab $w={224} $sep>
                <Gmail />
                <TabLabel $fade>Inbox (20) - jesus.barrera</TabLabel>
                <X size={14} />
              </BrowserTab>
              <BrowserTab $w={226}>
                <QuoraMark />
                <TabLabel $fade $ls={0.4}>An Introduction to Elast</TabLabel>
                <X size={14} />
              </BrowserTab>
              <BrowserTab $w={224} $active>
                <SmallKibana />
                <TabLabel>Kibana</TabLabel>
                <X size={14} />
              </BrowserTab>
              <BrowserTab $w={225} $sep>
                <GitHubMark />
                <TabLabel $fade $ls={0.4}>Editing kibana/README</TabLabel>
                <X size={14} />
              </BrowserTab>
              <NewTab><Plus size={20} /></NewTab>
            </TabStrip>
            <NavBar>
              <BackCircle><ArrowLeft size={20} /></BackCircle>
              <NavSlot $w={16} $ml={8} $c="#aeaca8"><ArrowRight size={20} /></NavSlot>
              <NavSlot $w={16} $ml={17}><RotateCw size={16} /></NavSlot>
              <NavSlot $w={16} $ml={15}><Home size={17} /></NavSlot>
              <UrlBox>
                <Info size={15} color="#6a6865" />
                <UrlText><b>localhost</b>:5601/app/kibana#/management/kibana/objects?_g=(refreshInterval:(display:'5 seconds',pause:!f,section:1,value:5000),ti</UrlText>
                <UrlDots>•••</UrlDots>
                <NavSlot $w={17} $ml={8}><Pocket /></NavSlot>
                <NavSlot $w={18} $ml={11}><Star size={17} /></NavSlot>
              </UrlBox>
              <SearchBox>
                <Search size={17} color="#8e8c88" />
                <span>Buscar</span>
              </SearchBox>
              <NavSlot $w={16} $ml={126}><DownloadBlue /></NavSlot>
              <NavSlot $w={16} $ml={17}><LibraryIco /></NavSlot>
              <NavSlot $w={16} $ml={16}><SidebarIco /></NavSlot>
              <ToolSep />
              <NavSlot $w={16} $ml={12}><Burger /></NavSlot>
            </NavBar>
            <Bookmarks>
              <Bookmark $w={117}><FaCog size={14} color="#5c5a56" />Most Visited</Bookmark>
              <Bookmark $w={138}><FirefoxSmall />Getting Started</Bookmark>
              <Bookmark $w={120}><FolderOutline />Elasticsearch</Bookmark>
            </Bookmarks>
            <KibanaApp>
              <Side>
                <LogoBar>
                  <KibanaMark />
                  <span>kibana</span>
                </LogoBar>
                <NavList>
                  <NavItem><Compass />Discover</NavItem>
                  <NavItem><VisualizeIcon />Visualize</NavItem>
                  <NavItem><DashIcon />Dashboard</NavItem>
                  <NavItem><BearIcon />Timelion</NavItem>
                  <NavItem><FaWrench />Dev Tools</NavItem>
                  <NavItem $active><FaCog />Management</NavItem>
                  <NavItem $end><CollapseIcon />Collapse</NavItem>
                </NavList>
              </Side>
              <Page>
                <AppHeader>
                  <Crumbs>
                    <a>Management</a>
                    <span>/</span>
                    <a>Kibana</a>
                  </Crumbs>
                  <HeaderTabs>
                    <HeaderTab>Index Patterns</HeaderTab>
                    <HeaderTab $active>Saved Objects</HeaderTab>
                    <HeaderTab>Advanced Settings</HeaderTab>
                  </HeaderTabs>
                </AppHeader>
                <Container>
                  <TitleRow>
                    <Title>Edit Saved Objects</Title>
                    <KButton $w={163}><FaDownload size={13} />Export Everything</KButton>
                    <KButton $w={90} $primary><FaUpload size={13} />Import</KButton>
                  </TitleRow>
                  <Lead>
                    From here you can delete saved objects, such as saved searches. You can also edit the raw data of saved objects. Typically objects are only modified via their<br />
                    associated application, which is probably what you should use instead of this screen. Each tab is limited to 100 results. You can use the filter to find objects<br />
                    not in the recent list.
                  </Lead>
                  <ObjectTabs>
                    <ObjectTab>Dashboards (0)</ObjectTab>
                  </ObjectTabs>
                  <FilterBar>
                    <FilterInput><Search size={14} color="#999" />Search</FilterInput>
                    <GhostBtn>Export</GhostBtn>
                  </FilterBar>
                  <TableBody />
                  <TableFoot />
                </Container>
              </Page>
            </KibanaApp>
          </Browser>
        </Desktop>

        <Dialog>
          <DialogTitle>
            <WinBtn $close><X size={9} strokeWidth={3} /></WinBtn>
            <WinBtn><MaxGlyph /></WinBtn>
            <DialogTitleText>Carga de archivos</DialogTitleText>
          </DialogTitle>
          <DialogBody>
            <Places>
              {places.map((p) => (
                <Place key={p.name}>{p.icon}<PlaceName>{p.name}</PlaceName></Place>
              ))}
              <Place><DriveIco /><PlaceName>sf_VM_CarpertaCompartida</PlaceName><Eject><EjectIco /></Eject></Place>
              <PlaceRule />
              <Place $mt={5}><DiscIco /><PlaceName>VBox_GAs_5.2.6</PlaceName><Eject><EjectIco /></Eject></Place>
            </Places>
            <FilesPane>
              <PathBar>
                <Crumb $w={21} $first><Caret style={{ transform: "rotate(90deg)" }} /></Crumb>
                <Crumb $w={84}><FaHome size={15} />jbarrera</Crumb>
                <Crumb $w={82}>Descargas</Crumb>
                <Crumb $w={59} $on>kibana</Crumb>
                <Crumb $w={22} $last><Caret style={{ transform: "rotate(-90deg)", opacity: 0.5 }} /></Crumb>
              </PathBar>
              <ListPane>
                <ColHead>
                  <Col $w={329}>Nombre</Col>
                  <Col $w={67} $sep>Tamaño</Col>
                  <Col $w={110} $sep>Modificado<Caret /></Col>
                </ColHead>
                <FileRow>
                  <FileName><JsonFile />dashboard_prueba.json</FileName>
                  <Cell $w={67}>8,2 kB</Cell>
                  <Cell $w={110}>vie</Cell>
                </FileRow>
              </ListPane>
            </FilesPane>
          </DialogBody>
          <DialogFilter>
            <GtkBtn $w={157} $h={30}>Todos los archivos<Caret /></GtkBtn>
          </DialogFilter>
          <DialogActions>
            <GtkBtn $w={81} $h={27}>Cancelar</GtkBtn>
            <OpenBtn $w={81} $h={28}>Abrir</OpenBtn>
          </DialogActions>
        </Dialog>

        <Mark $l={871} $t={378} $w={231} $h={55} />
        <Mark $l={1287} $t={667} $w={104} $h={48} />
        <Digit $l={1142} $t={370} $font="Roboto">1</Digit>
        <Digit $l={1393} $t={650} $font={`"Liberation Sans"`}>2</Digit>
      </Screen>
    </>
  );
}
